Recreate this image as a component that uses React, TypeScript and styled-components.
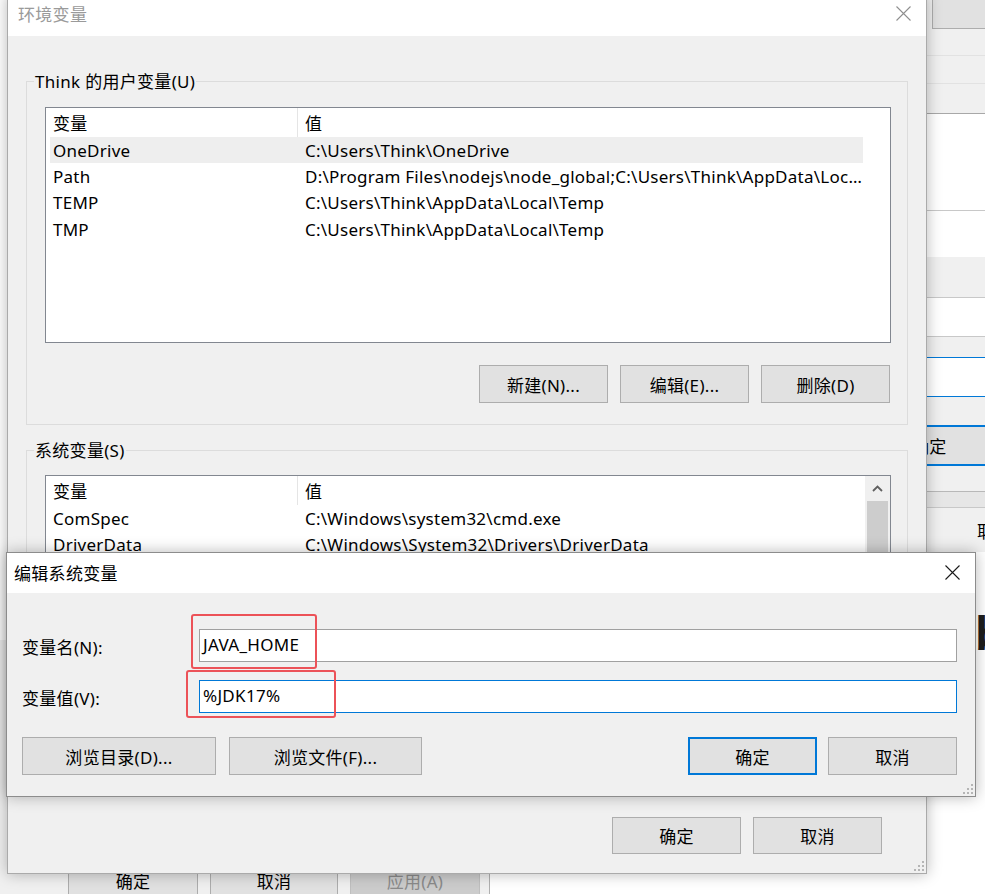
import React from "react";
import styled, { createGlobalStyle, css } from "styled-components";

const FONT = `"Noto Sans", "Noto Sans CJK SC", sans-serif`;

const GlobalStyle = createGlobalStyle`
  html, body { margin: 0; padding: 0; background: #ffffff; }
  * { box-sizing: border-box; }
`;

const Desktop = styled.div`
  position: relative;
  width: 985px;
  height: 894px;
  overflow: hidden;
  background: #ffffff;
  font-family: ${FONT};
  font-size: 17px;
  letter-spacing: 0.3px;
  color: #000;
`;

/* ---------- generic window placed on the desktop canvas ---------- */
const Win = styled.div<{ $x: number; $y: number; $w: number; $h: number; $z: number }>`
  position: absolute;
  left: ${(p) => p.$x}px;
  top: ${(p) => p.$y}px;
  width: ${(p) => p.$w}px;
  height: ${(p) => p.$h}px;
  z-index: ${(p) => p.$z};
  display: flex;
  flex-direction: column;
`;

const DialogWin = styled(Win)<{ $active?: boolean }>`
  background: #f0f0f0;
  border: 1px solid ${(p) => (p.$active ? "#8c8c8c" : "#aaaaaa")};
  box-shadow: 0 0 14px rgba(0, 0, 0, 0.28);
`;

const TitleBar = styled.div<{ $h: number; $active?: boolean; $pl: number; $pb?: number }>`
  height: ${(p) => p.$h}px;
  flex: none;
  background: #ffffff;
  display: flex;
  align-items: center;
  justify-content: space-between;
  padding: 0 15px ${(p) => p.$pb ?? 0}px ${(p) => p.$pl}px;
  color: ${(p) => (p.$active ? "#000000" : "#9a9a9a")};
  font-size: 17px;
`;

const CloseX = ({ color }: { color: string }) => (
  <svg width="15" height="15" viewBox="0 0 15 15">
    <path d="M0.5 0.5 L14.5 14.5 M14.5 0.5 L0.5 14.5" stroke={color} strokeWidth="1.1" fill="none" />
  </svg>
);

const Grip = styled.div`
  position: absolute;
  right: 2px;
  bottom: 2px;
  width: 10px;
  height: 10px;
  line-height: 0;
`;

const ResizeGrip = () => (
  <Grip>
    <svg width="10" height="10" viewBox="0 0 10 10">
      {[
        [8, 0],
        [4, 4],
        [8, 4],
        [0, 8],
        [4, 8],
        [8, 8],
      ].map(([x, y], i) => (
        <rect key={i} x={x} y={y} width="2" height="2" fill="#b5b5b5" />
      ))}
    </svg>
  </Grip>
);

/* ---------- buttons ---------- */
const Btn = styled.div<{ $w: number; $h?: number; $def?: boolean; $disabled?: boolean }>`
  width: ${(p) => p.$w}px;
  height: ${(p) => p.$h ?? 38}px;
  flex: none;
  display: flex;
  align-items: center;
  justify-content: center;
  background: #e1e1e1;
  border: 1px solid #adadad;
  color: #000;
  font-size: 17px;
  white-space: nowrap;
  ${(p) =>
    p.$def &&
    css`
      border: 2px solid #0078d7;
    `}
  ${(p) =>
    p.$disabled &&
    css`
      background: #cccccc;
      border-color: #bfbfbf;
      color: #8a8a8a;
    `}
`;

const BtnRow = styled.div<{ $gap: number; $justify?: string; $mt?: number; $pr?: number }>`
  display: flex;
  gap: ${(p) => p.$gap}px;
  justify-content: ${(p) => p.$justify ?? "flex-end"};
  margin-top: ${(p) => p.$mt ?? 0}px;
  padding-right: ${(p) => p.$pr ?? 0}px;
`;

/* ---------- group box ---------- */
const GroupBox = styled.div<{ $mt: number; $pb: number }>`
  margin-top: ${(p) => p.$mt}px;
  border: 1px solid #dcdcdc;
  border-top: none;
  padding: 0 16px ${(p) => p.$pb}px 18px;
  display: flex;
  flex-direction: column;
`;

const GroupHead = styled.div`
  display: flex;
  align-items: center;
  height: 24px;
  margin: -12px -17px 0 -19px;
  &::before {
    content: "";
    width: 8px;
    border-top: 1px solid #dcdcdc;
  }
  &::after {
    content: "";
    flex: 1;
    border-top: 1px solid #dcdcdc;
  }
`;

const GroupLabel = styled.span`
  padding: 2px 1px 0;
  line-height: 20px;
  font-size: 17px;
  color: #000;
  white-space: nowrap;
`;

/* ---------- list view ---------- */
const ListFrame = styled.div<{ $h: number; $mt: number }>`
  height: ${(p) => p.$h}px;
  margin-top: ${(p) => p.$mt}px;
  border: 1px solid #828790;
  background: #ffffff;
  display: flex;
  overflow: hidden;
  letter-spacing: 0.25px;
`;

const ListMain = styled.div`
  flex: 1;
  min-width: 0;
  display: flex;
  flex-direction: column;
`;

const HeaderRow = styled.div`
  display: flex;
  height: 29px;
  width: 817px;
  flex: none;
`;

const HeaderCell = styled.div<{ $w?: number; $divider?: boolean }>`
  ${(p) => (p.$w ? `width: ${p.$w}px;` : "flex: 1;")}
  padding-left: 7px;
  display: flex;
  align-items: center;
  ${(p) => p.$divider && "border-right: 1px solid #e5e5e5;"}
`;

const Row = styled.div<{ $sel?: boolean }>`
  display: flex;
  height: 26.4px;
  flex: none;
  width: 813px;
  margin-left: 4px;
  align-items: center;
  background: ${(p) => (p.$sel ? "#eeeeee" : "transparent")};
`;

const Cell = styled.div<{ $w?: number; $pl: number }>`
  ${(p) => (p.$w ? `width: ${p.$w}px;` : "flex: 1;")}
  padding-left: ${(p) => p.$pl}px;
  white-space: nowrap;
  overflow: hidden;
  min-width: 0;
`;

const ScrollBar = styled.div`
  width: 25px;
  flex: none;
  background: #f0f0f0;
  display: flex;
  flex-direction: column;
`;

const ScrollArrow = styled.div`
  height: 25px;
  flex: none;
  display: flex;
  align-items: center;
  justify-content: center;
  background: #f0f0f0;
`;

const ScrollThumb = styled.div`
  flex: 1;
  margin: 0 2px;
  background: #cdcdcd;
`;

type Var = { name: string; value: string; sel?: boolean };

const ListView = ({ rows, h, mt, scroll }: { rows: Var[]; h: number; mt: number; scroll?: boolean }) => (
  <ListFrame $h={h} $mt={mt}>
    <ListMain>
      <HeaderRow>
        <HeaderCell $w={252} $divider>
          变量
        </HeaderCell>
        <HeaderCell>值</HeaderCell>
      </HeaderRow>
      {rows.map((r) => (
        <Row key={r.name} $sel={r.sel}>
          <Cell $w={248} $pl={3}>
            {r.name}
          </Cell>
          <Cell $pl={7}>{r.value}</Cell>
        </Row>
      ))}
    </ListMain>
    {scroll && (
      <ScrollBar>
        <ScrollArrow>
          <svg width="11" height="7" viewBox="0 0 11 7">
            <path d="M1 6 L5.5 1.5 L10 6" stroke="#606060" strokeWidth="1.8" fill="none" />
          </svg>
        </ScrollArrow>
        <ScrollThumb />
      </ScrollBar>
    )}
  </ListFrame>
);

/* ---------- env dialog ---------- */
const EnvBody = styled.div`
  flex: 1;
  display: flex;
  flex-direction: column;
  padding: 0 18px 0 18px;
`;

/* ---------- edit dialog ---------- */
const EditBody = styled.div`
  flex: 1;
  display: flex;
  flex-direction: column;
  padding: 36px 18px 0 15px;
`;

const FormGrid = styled.div`
  display: grid;
  grid-template-columns: 177px 1fr;
  row-gap: 18px;
  align-items: center;
`;

const FieldLabel = styled.div`
  font-size: 17px;
  padding-top: 1px;
  white-space: nowrap;
`;

const TextBox = styled.div<{ $focus?: boolean }>`
  height: 33px;
  background: #ffffff;
  border: 1px solid ${(p) => (p.$focus ? "#0078d7" : "#a0a0a0")};
  display: flex;
  align-items: center;
  padding: 0 0 2px 3px;
  font-size: 17px;
`;

const Annot = styled.div<{ $x: number; $y: number; $w: number; $h: number }>`
  position: absolute;
  left: ${(p) => p.$x}px;
  top: ${(p) => p.$y}px;
  width: ${(p) => p.$w}px;
  height: ${(p) => p.$h}px;
  border: 2px solid #ec5258;
  border-radius: 3px;
  z-index: 10;
  pointer-events: none;
`;

const Spread = styled.div`
  display: flex;
  justify-content: space-between;
  margin-top: 24px;
`;

/* ---------- background windows ---------- */
const BackWin = styled(Win)`
  background: #f0f0f0;
`;

const Band = styled.div<{ $h: number; $bg: string; $line?: string; $blue?: boolean }>`
  height: ${(p) => p.$h}px;
  flex: none;
  background: ${(p) => p.$bg};
  ${(p) => p.$line && `border-bottom: 1px solid ${p.$line};`}
  ${(p) => p.$blue && "border-top: 1px solid #0078d7; border-bottom: 1px solid #0078d7;"}
  display: flex;
  align-items: center;
  white-space: nowrap;
`;

const BandBtn = styled.div`
  margin-left: 52px;
  align-self: flex-end;
  height: 29px;
  width: 80px;
  background: #e1e1e1;
  border: 1px solid #adadad;
  border-top: none;
`;

const BandDefault = styled.div`
  height: 41px;
  flex: none;
  background: #e1e1e1;
  border-top: 2px solid #0078d7;
  border-bottom: 2px solid #0078d7;
  display: flex;
  align-items: center;
  padding-left: 32px;
  font-size: 17px;
  white-space: nowrap;
`;

const BandText = styled.span<{ $pl: number }>`
  padding-left: ${(p) => p.$pl}px;
  font-size: 17px;
  white-space: nowrap;
`;

const PageArea = styled.div`
  flex: 1;
  background: #ffffff;
  padding: 58px 0 0 95px;
`;

const BigGlyph = styled.div`
  font-family: "Liberation Sans", sans-serif;
  font-weight: 700;
  font-size: 48px;
  line-height: 1;
  color: #1e1e1e;
`;

const SysBody = styled.div`
  flex: 1;
  padding: 222px 0 0 70px;
`;

const BackSys = styled(Win)`
  background: #f0f0f0;
  border-right: 1px solid #b0b0b0;
`;

const userVars: Var[] = [
  { name: "OneDrive", value: "C:\\Users\\Think\\OneDrive", sel: true },
  { name: "Path", value: "D:\\Program Files\\nodejs\\node_global;C:\\Users\\Think\\AppData\\Loc…" },
  { name: "TEMP", value: "C:\\Users\\Think\\AppData\\Local\\Temp" },
  { name: "TMP", value: "C:\\Users\\Think\\AppData\\Local\\Temp" },
];

const sysVars: Var[] = [
  { name: "ComSpec", value: "C:\\Windows\\system32\\cmd.exe" },
  { name: "DriverData", value: "C:\\Windows\\System32\\Drivers\\DriverData" },
];

export default function App() {
  return (
    <>
      <GlobalStyle />
      <Desktop>
        {/* window far behind on the right */}
        <BackWin $x={880} $y={0} $w={110} $h={894} $z={1}>
          <Band $h={29} $bg="#f0f0f0">
            <BandBtn />
          </Band>
          <Band $h={27} $bg="#f0f0f0" $line="#e2e2e2" />
          <Band $h={28} $bg="#f0f0f0" $line="#e2e2e2" />
          <Band $h={30} $bg="#f0f0f0" $line="#a8a8a8" />
          <Band $h={97} $bg="#ffffff" $line="#c8c8c8" />
          <Band $h={46} $bg="#ffffff" />
          <Band $h={41} $bg="#f0f0f0" $line="#c8c8c8" />
          <Band $h={39} $bg="#ffffff" $line="#c8c8c8" />
          <Band $h={20} $bg="#f0f0f0" />
          <Band $h={40} $bg="#ffffff" $blue />
          <Band $h={28} $bg="#f0f0f0" />
          <BandDefault>确定</BandDefault>
          <Band $h={26} $bg="#f0f0f0" $line="#b8b8b8" />
          <Band $h={16} $bg="#e6e6e6" $line="#c8c8c8" />
          <Band $h={44} $bg="#f0f0f0">
            <BandText $pl={97}>取消</BandText>
          </Band>
          <PageArea>
            <BigGlyph>b</BigGlyph>
          </PageArea>
        </BackWin>

        {/* system properties window behind, bottom left */}
        <BackSys $x={-2} $y={640} $w={492} $h={300} $z={2}>
          <SysBody>
            <BtnRow $gap={12} $justify="flex-start">
              <Btn $w={130} $h={37}>确定</Btn>
              <Btn $w={128} $h={37}>取消</Btn>
              <Btn $w={130} $h={37} $disabled>
                应用(A)
              </Btn>
            </BtnRow>
          </SysBody>
        </BackSys>

        {/* 环境变量 dialog */}
        <DialogWin $x={7} $y={-6} $w={920} $h={880} $z={3}>
          <TitleBar $h={41} $pl={10} $pb={5}>
            <span>环境变量</span>
            <CloseX color="#8f8f8f" />
          </TitleBar>
          <EnvBody>
            <GroupBox $mt={45} $pb={21}>
              <GroupHead>
                <GroupLabel>Think 的用户变量(U)</GroupLabel>
              </GroupHead>
              <ListView rows={userVars} h={236} mt={14} />
              <BtnRow $gap={12} $mt={22} $pr={1}>
                <Btn $w={129}>新建(N)...</Btn>
                <Btn $w={129}>编辑(E)...</Btn>
                <Btn $w={129}>删除(D)</Btn>
              </BtnRow>
            </GroupBox>
            <GroupBox $mt={25} $pb={16}>
              <GroupHead>
                <GroupLabel>系统变量(S)</GroupLabel>
              </GroupHead>
              <ListView rows={sysVars} h={300} mt={13} scroll />
            </GroupBox>
            <BtnRow $gap={12} $mt={25} $pr={26}>
              <Btn $w={129} $h={37}>确定</Btn>
              <Btn $w={129} $h={37}>取消</Btn>
            </BtnRow>
          </EnvBody>
          <ResizeGrip />
        </DialogWin>

        {/* 编辑系统变量 dialog */}
        <DialogWin $x={6} $y={552} $w={970} $h={245} $z={4} $active>
          <TitleBar $h={40} $pl={7} $pb={2} $active>
            <span>编辑系统变量</span>
            <CloseX color="#1a1a1a" />
          </TitleBar>
          <EditBody>
            <FormGrid>
              <FieldLabel>变量名(N):</FieldLabel>
              <TextBox>JAVA_HOME</TextBox>
              <FieldLabel>变量值(V):</FieldLabel>
              <TextBox $focus>%JDK17%</TextBox>
            </FormGrid>
            <Spread>
              <BtnRow $gap={13} $justify="flex-start">
                <Btn $w={194}>浏览目录(D)...</Btn>
                <Btn $w={193}>浏览文件(F)...</Btn>
              </BtnRow>
              <BtnRow $gap={11}>
                <Btn $w={129} $def>
                  确定
                </Btn>
                <Btn $w={129}>取消</Btn>
              </BtnRow>
            </Spread>
          </EditBody>
          <ResizeGrip />
        </DialogWin>

        <Annot $x={191} $y={614} $w={126} $h={55} />
        <Annot $x={186} $y={670} $w={150} $h={48} />
      </Desktop>
    </>
  );
}
